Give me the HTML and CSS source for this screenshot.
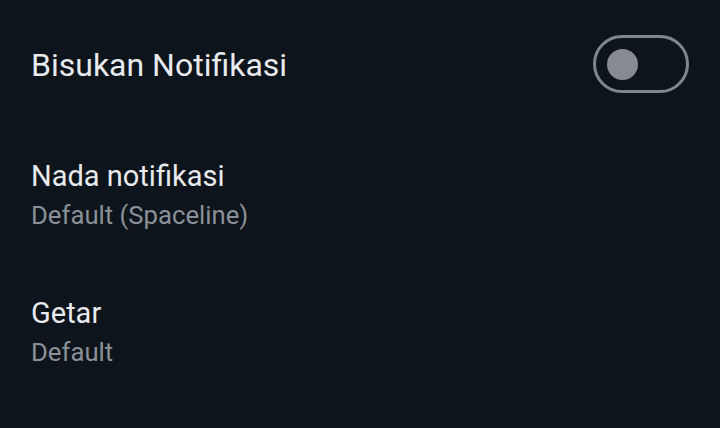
FILE: index.html
```html
<!DOCTYPE html>
<html lang="id">
<head>
    <meta charset="UTF-8">
    <meta name="viewport" content="width=device-width, initial-scale=1.0">
    <title>Notifikasi</title>
    <link rel="stylesheet" href="styles.css">
</head>
<body>
    <div class="settings">
        <div class="setting-row switch-row">
            <div class="setting-title">Bisukan Notifikasi</div>
            <div class="toggle">
                <div class="toggle-knob"></div>
            </div>
        </div>
        <div class="setting-row">
            <div class="setting-title">Nada notifikasi</div>
            <div class="setting-sub">Default (Spaceline)</div>
        </div>
        <div class="setting-row">
            <div class="setting-title">Getar</div>
            <div class="setting-sub">Default</div>
        </div>
    </div>
</body>
</html>
```

FILE: styles.css
```css
body {
    margin: 0;
    padding: 0;
    background: #0d141b;
    font-family: Roboto, "Noto Sans", sans-serif;
    color: #e8eaed;
    height: 428px;
    overflow: hidden;
}
.settings {
    padding: 0 31px;
}
.setting-row {
    padding: 28px 0 31px;
}
.switch-row {
    display: flex;
    justify-content: space-between;
    align-items: center;
    height: 128px;
    padding: 0;
    box-sizing: border-box;
}
.switch-row .setting-title {
    font-size: 32px;
    margin-top: 1px;
}
.setting-title {
    font-size: 29px;
    line-height: 40px;
    color: #e8eaed;
}
.setting-sub {
    font-size: 25.7px;
    line-height: 38px;
    color: #8a9097;
}
.toggle {
    width: 96px;
    height: 58px;
    box-sizing: border-box;
    border: 3px solid #80868d;
    border-radius: 29px;
    display: flex;
    align-items: center;
    padding-left: 11px;
}
.toggle-knob {
    width: 31px;
    height: 31px;
    border-radius: 50%;
    background: #868b92;
}
```
